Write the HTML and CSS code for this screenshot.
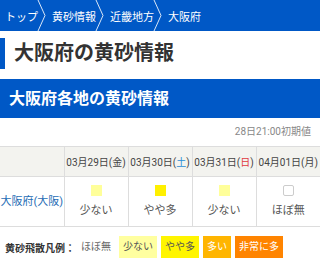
FILE: index.html
```html
<!DOCTYPE html>
<html lang="ja">
<head>
    <meta charset="UTF-8">
    <meta name="viewport" content="width=device-width, initial-scale=1.0">
    <title>大阪府の黄砂情報</title>
    <link rel="stylesheet" href="styles.css">
</head>
<body>
    <!-- Breadcrumb -->
    <nav class="breadcrumb">
        <a href="#">トップ</a>
        <svg class="sep" viewBox="0 0 9 31"><polyline points="1,0 8,15.5 1,31" /></svg>
        <a href="#">黄砂情報</a>
        <svg class="sep" viewBox="0 0 9 31"><polyline points="1,0 8,15.5 1,31" /></svg>
        <a href="#">近畿地方</a>
        <svg class="sep" viewBox="0 0 9 31"><polyline points="1,0 8,15.5 1,31" /></svg>
        <span>大阪府</span>
    </nav>

    <h1 class="page-title">大阪府の黄砂情報</h1>

    <section class="kosa">
        <h2 class="section-title">大阪府各地の黄砂情報</h2>
        <p class="update">28日21:00初期値</p>

        <table class="kosa-table">
            <tr class="head">
                <th></th>
                <th>03月29日(金)</th>
                <th>03月30日(<span class="sat">土</span>)</th>
                <th>03月31日(<span class="sun">日</span>)</th>
                <th>04月01日(月)</th>
            </tr>
            <tr>
                <td class="point"><a href="#">大阪府(大阪)</a></td>
                <td><span class="level lv1"></span>少ない</td>
                <td><span class="level lv2"></span>やや多</td>
                <td><span class="level lv1"></span>少ない</td>
                <td><span class="level lv0"></span>ほぼ無</td>
            </tr>
        </table>

        <!-- Legend -->
        <div class="legend">
            <span class="legend-label">黄砂飛散凡例：</span>
            <span class="chip">ほぼ無</span>
            <span class="chip lv1">少ない</span>
            <span class="chip lv2">やや多</span>
            <span class="chip lv3">多い</span>
            <span class="chip lv4">非常に多</span>
        </div>
    </section>
</body>
</html>
```

FILE: styles.css
```css
/* Basic Reset */
* {
    margin: 0;
    padding: 0;
    box-sizing: border-box;
}

body {
    font-family: Roboto, "Noto Sans CJK JP", sans-serif;
    background-color: #fff;
    color: #333;
}

a {
    color: inherit;
    text-decoration: none;
}

/* Breadcrumb */
.breadcrumb {
    display: flex;
    align-items: center;
    height: 31px;
    padding-left: 5px;
    background-color: #0058c6;
    color: #fff;
    font-size: 11px;
}

.breadcrumb .sep {
    width: 9px;
    height: 31px;
    margin: 0 6px 0 -1px;
    fill: none;
    stroke: rgba(255, 255, 255, 0.85);
    stroke-width: 1;
}

/* Page title */
.page-title {
    margin: 7px 0 10px;
    padding-left: 9px;
    border-left: 5px solid #0058c6;
    font-size: 20px;
    line-height: 31px;
    color: #333;
}

/* Section */
.section-title {
    height: 39px;
    padding-left: 9px;
    background-color: #0058c6;
    color: #fff;
    font-size: 16px;
    line-height: 39px;
}

.update {
    padding: 4px 9px 0 0;
    margin-bottom: 4px;
    text-align: right;
    font-size: 10px;
    line-height: 20px;
    color: #888;
}

/* Table */
.kosa-table {
    width: 100%;
    border-collapse: collapse;
    table-layout: fixed;
    font-size: 11px;
}

.kosa-table th,
.kosa-table td {
    border: 1px solid #ddd;
    text-align: center;
    font-weight: normal;
}

.kosa-table tr > :first-child {
    border-left: none;
}

.kosa-table tr > :last-child {
    border-right: none;
}

.kosa-table .head th {
    height: 30px;
    background-color: #f3f3ef;
    color: #444;
    font-size: 10px;
    white-space: nowrap;
}

.sat {
    color: #2a8fd6;
}

.sun {
    color: #e0393e;
}

.kosa-table td {
    height: 50px;
    color: #555;
    line-height: 16px;
}

.kosa-table td.point {
    color: #1f6db5;
}

.level {
    display: block;
    width: 11px;
    height: 11px;
    margin: 0 auto 7px;
}

.level.lv0 {
    border: 1px solid #ccc;
    border-radius: 2px;
    background-color: #fff;
}

.level.lv1 {
    background-color: #ffff9a;
}

.level.lv2 {
    background-color: #fff000;
}

/* Legend */
.legend {
    display: flex;
    align-items: center;
    gap: 4px;
    margin-top: 9px;
    padding-left: 5px;
    font-size: 10px;
}

.legend-label {
    font-weight: bold;
    color: #333;
    margin-right: -2px;
}

.chip {
    height: 22px;
    line-height: 22px;
    padding: 0 4px;
    color: #666;
}

.chip.lv1 {
    background-color: #ffffa0;
    color: #555;
}

.chip.lv2 {
    background-color: #fff500;
    color: #555;
}

.chip.lv3 {
    background-color: #ffb500;
    color: #fff;
}

.chip.lv4 {
    background-color: #ff8400;
    color: #fff;
}
```
